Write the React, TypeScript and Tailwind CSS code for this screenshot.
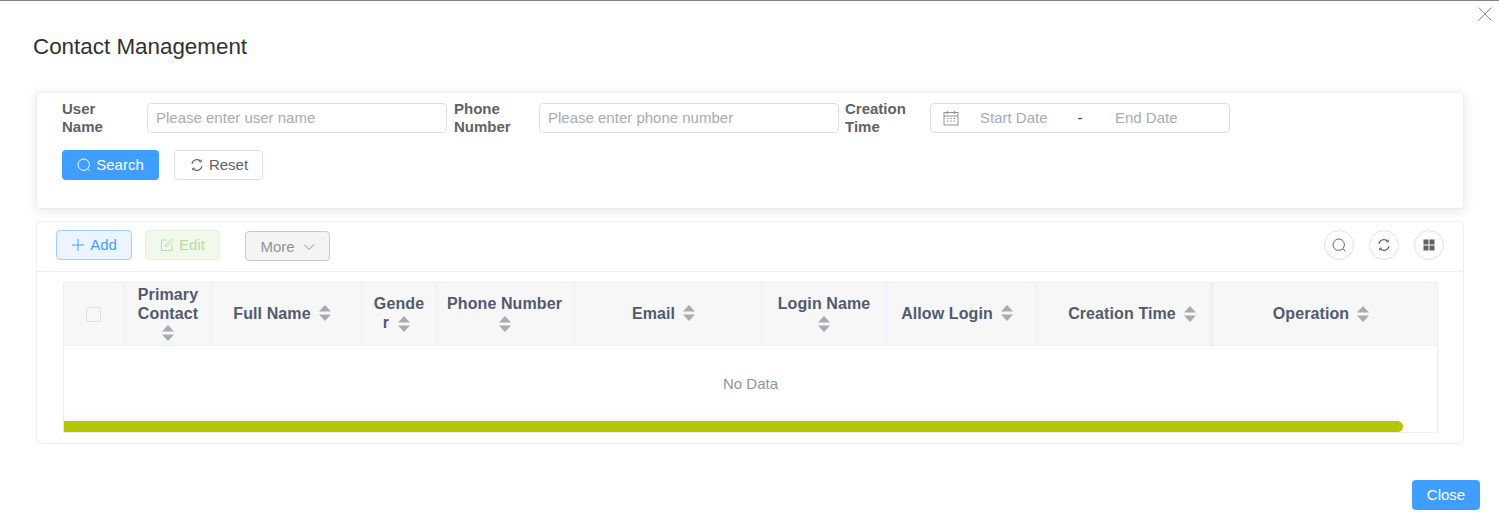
import React from 'react'

const SearchIcon = ({ className }: { className?: string }) => (
  <svg viewBox="0 0 14 14" fill="none" stroke="currentColor" strokeWidth="1" className={className}>
    <circle cx="6.700" cy="6.700" r="5.700" />
    <path d="M10.800 10.800L13 13" strokeLinecap="round" />
  </svg>
)

const RefreshIcon = ({ className }: { className?: string }) => (
  <svg viewBox="0 0 12 12" fill="none" stroke="currentColor" strokeWidth="1.100" className={className}>
    <path d="M1 4.800A5.100 5.100 0 0 1 9.800 2.300" />
    <path d="M11 7.200A5.100 5.100 0 0 1 2.200 9.700" />
    <path d="M10.300 .6v2.200H8.100" strokeWidth="1" />
    <path d="M1.700 11.400V9.200h2.200" strokeWidth="1" />
  </svg>
)

const Carets = () => (
  <svg viewBox="0 0 12 16" width="12" height="16" className="inline-block shrink-0 align-middle text-[#a8abb2]" fill="currentColor">
    <path d="M6 0L12 6.500H0z" />
    <path d="M0 9.500H12L6 16z" />
  </svg>
)

const inputClass =
  'h-[30px] w-[300px] rounded border border-[#dcdfe6] px-2 pb-[2px] text-[15px] text-[#606266] outline-none placeholder:text-[#a8abb2]'
const labelClass = 'pr-2 text-[15px] font-bold leading-[18px] text-[#606266]'
const cellClass =
  'flex h-full items-center justify-center border-r border-[#ebeef5] text-center text-base font-bold leading-[19px] tracking-[0.1px] text-[#515a6e]'
const sortCellClass = cellClass + ' gap-2 pr-[9px] pb-[2px]'

export default function App() {
  return (
    <div className="relative h-[530px] w-full overflow-hidden border-t border-t-[#7f7f7f] bg-white font-['Liberation_Sans',sans-serif]">
      <button className="absolute right-[7px] top-[6px] text-[#8a8d93]">
        <svg viewBox="0 0 14 14" width="14" height="14" fill="none" stroke="currentColor" strokeWidth="1">
          <path d="M.5.5l13 13M13.500.5l-13 13" />
        </svg>
      </button>

      <h1 className="pl-[33px] pt-[32px] text-[22.400px] leading-[28px] text-[#303133]">Contact Management</h1>

      {/* search form */}
      <div className="ml-[36px] mr-[35px] mt-[31px] h-[117px] rounded border border-[#ebeef5] bg-white shadow-[0_2px_12px_0_rgba(0,0,0,0.1)]">
        <div className="flex items-center pl-[17px] pt-[7px]">
          <label className={labelClass + ' w-[93px] pl-2'}>
            User
            <br />
            Name
          </label>
          <input className={inputClass} placeholder="Please enter user name" />
          <label className={labelClass + ' w-[92px] pl-[7px]'}>
            Phone
            <br />
            Number
          </label>
          <input className={inputClass} placeholder="Please enter phone number" />
          <label className={labelClass + ' w-[91px] pl-[6px]'}>
            Creation
            <br />
            Time
          </label>
          <div className="flex h-[30px] w-[300px] items-center rounded border border-[#dcdfe6] pl-[12px] text-[15px] text-[#a8abb2]">
            <svg viewBox="0 0 16 16" width="16" height="16" fill="none" stroke="#909399" strokeWidth="1">
              <rect x="1" y="2.500" width="14" height="12.500" />
              <path d="M1 6h14M4.500 1v3M11.500 1v3" />
              <path d="M4 8.500h1.500M7.250 8.500h1.500M10.500 8.500h1.500M4 11h1.500M7.250 11h1.500M10.500 11h1.500" />
            </svg>
            <span className="ml-[21px] w-[68px] whitespace-nowrap text-left">Start Date</span>
            <span className="w-[64px] text-center text-[#303133]">-</span>
            <span className="ml-[3px] whitespace-nowrap text-left">End Date</span>
          </div>
        </div>
        <div className="ml-[25px] mt-[14px] flex gap-[15px]">
          <button className="flex h-[30px] w-[97px] items-center justify-center gap-[5px] rounded bg-[#409eff] text-[15px] text-white">
            <SearchIcon className="h-[14px] w-[14px]" />
            Search
          </button>
          <button className="flex h-[30px] w-[89px] items-center justify-center gap-[6px] rounded border border-[#dcdfe6] bg-white pl-[2px] text-[15px] text-[#606266]">
            <RefreshIcon className="h-[12px] w-[12px]" />
            Reset
          </button>
        </div>
      </div>

      {/* table card */}
      <div className="ml-[36px] mr-[35px] mt-[12px] h-[223px] rounded border border-[#ebeef5] bg-white">
        <div className="flex h-[50px] items-start border-b border-[#ebeef5] pl-[19px] pr-[19px] pt-[8px]">
          <button className="flex h-[30px] w-[76px] items-center justify-center gap-[5px] rounded border border-[#a0cfff] bg-[#ecf5ff] text-[15px] text-[#409eff]">
            <svg viewBox="0 0 14 14" width="14" height="14" fill="none" stroke="currentColor" strokeWidth="1">
              <path d="M7 1v12M1 7h12" />
            </svg>
            Add
          </button>
          <button className="ml-[13px] flex h-[30px] w-[75px] items-center justify-center gap-[5px] rounded border border-[#e1f3d8] bg-[#f0f9eb] text-[15px] text-[#b3e19d]">
            <svg viewBox="0 0 14 14" width="14" height="14" fill="none" stroke="currentColor" strokeWidth="1">
              <path d="M7 2H1.500v10.500H12V7" />
              <path d="M5.500 8.500l.4-2L11.500 1l1.500 1.500L7.500 8z" />
            </svg>
            Edit
          </button>
          <button className="ml-[25px] mt-[1px] flex h-[30px] w-[85px] items-center justify-center gap-[8px] rounded border border-[#c8c9cc] bg-[#f4f4f5] pt-[2px] text-[15px] text-[#909399]">
            More
            <svg viewBox="0 0 12 12" width="12" height="12" fill="none" stroke="currentColor" strokeWidth="1">
              <path d="M1 3.500l5 5 5-5" />
            </svg>
          </button>
          <div className="ml-auto flex gap-[15px]">
            <button className="flex h-[30px] w-[30px] items-center justify-center rounded-full border border-[#dcdfe6] text-[#606266]">
              <SearchIcon className="h-[14px] w-[14px]" />
            </button>
            <button className="flex h-[30px] w-[30px] items-center justify-center rounded-full border border-[#dcdfe6] text-[#606266]">
              <RefreshIcon className="h-[12px] w-[12px]" />
            </button>
            <button className="flex h-[30px] w-[30px] items-center justify-center rounded-full border border-[#dcdfe6] text-[#606266]">
              <svg viewBox="0 0 12 12" width="12" height="12" fill="currentColor">
                <rect x="0.500" y="0.500" width="5" height="5" />
                <rect x="6.500" y="0.500" width="5" height="5" />
                <rect x="0.500" y="6.500" width="5" height="5" />
                <rect x="6.500" y="6.500" width="5" height="5" />
              </svg>
            </button>
          </div>
        </div>

        <div className="ml-[26px] mr-[25px] mt-[10px] h-[151px] border border-[#ebeef5]">
          <div className="grid h-[63px] grid-cols-[61px_87px_150px_75px_138px_187px_125px_150px_176px_1fr] border-b border-[#ebeef5] bg-[#f7f7f8]">
            <div className={cellClass + ' pr-[2px]'}>
              <span className="h-[15px] w-[15px] rounded-[2px] border border-[#dcdfe6] bg-[#f5f7fa]" />
            </div>
            <div className={cellClass + ' pb-[2px]'}>
              <span>
                Primary
                <br />
                Contact
                <br />
                <Carets />
              </span>
            </div>
            <div className={sortCellClass}>
              Full Name <Carets />
            </div>
            <div className={cellClass + ' pb-[2px]'}>
              <span>
                Gende
                <br />
                <span className="mr-[9px]">r</span>
                <span className="mr-[5px]">
                  <Carets />
                </span>
              </span>
            </div>
            <div className={cellClass + ' pb-[2px] pr-[2px]'}>
              <span>
                Phone Number
                <br />
                <Carets />
              </span>
            </div>
            <div className={sortCellClass}>
              Email <Carets />
            </div>
            <div className={cellClass + ' pb-[2px]'}>
              <span>
                Login Name
                <br />
                <Carets />
              </span>
            </div>
            <div className={sortCellClass}>
              Allow Login <Carets />
            </div>
            <div className="flex h-full items-center justify-center gap-2 pl-[14px] text-base font-bold tracking-[0.1px] text-[#515a6e] shadow-[inset_-4px_0_4px_-3px_rgba(0,0,0,0.08)]">
              Creation Time <Carets />
            </div>
            <div className="flex h-full items-center justify-center gap-2 pr-[8px] text-base font-bold tracking-[0.1px] text-[#515a6e]">
              Operation <Carets />
            </div>
          </div>
          <div className="flex h-[75px] items-center justify-center pt-[2px] text-[15px] text-[#909399]">No Data</div>
          <div className="h-[11px] w-[1339px] rounded-r-[6px] bg-[#b4c600] shadow-[0_-2px_6px_rgba(0,0,0,0.06)]" />
        </div>
      </div>

      <div className="mr-[19px] mt-[36px] flex justify-end">
        <button className="h-[30px] w-[68px] rounded bg-[#409eff] text-[15px] text-white">Close</button>
      </div>
    </div>
  )
}
